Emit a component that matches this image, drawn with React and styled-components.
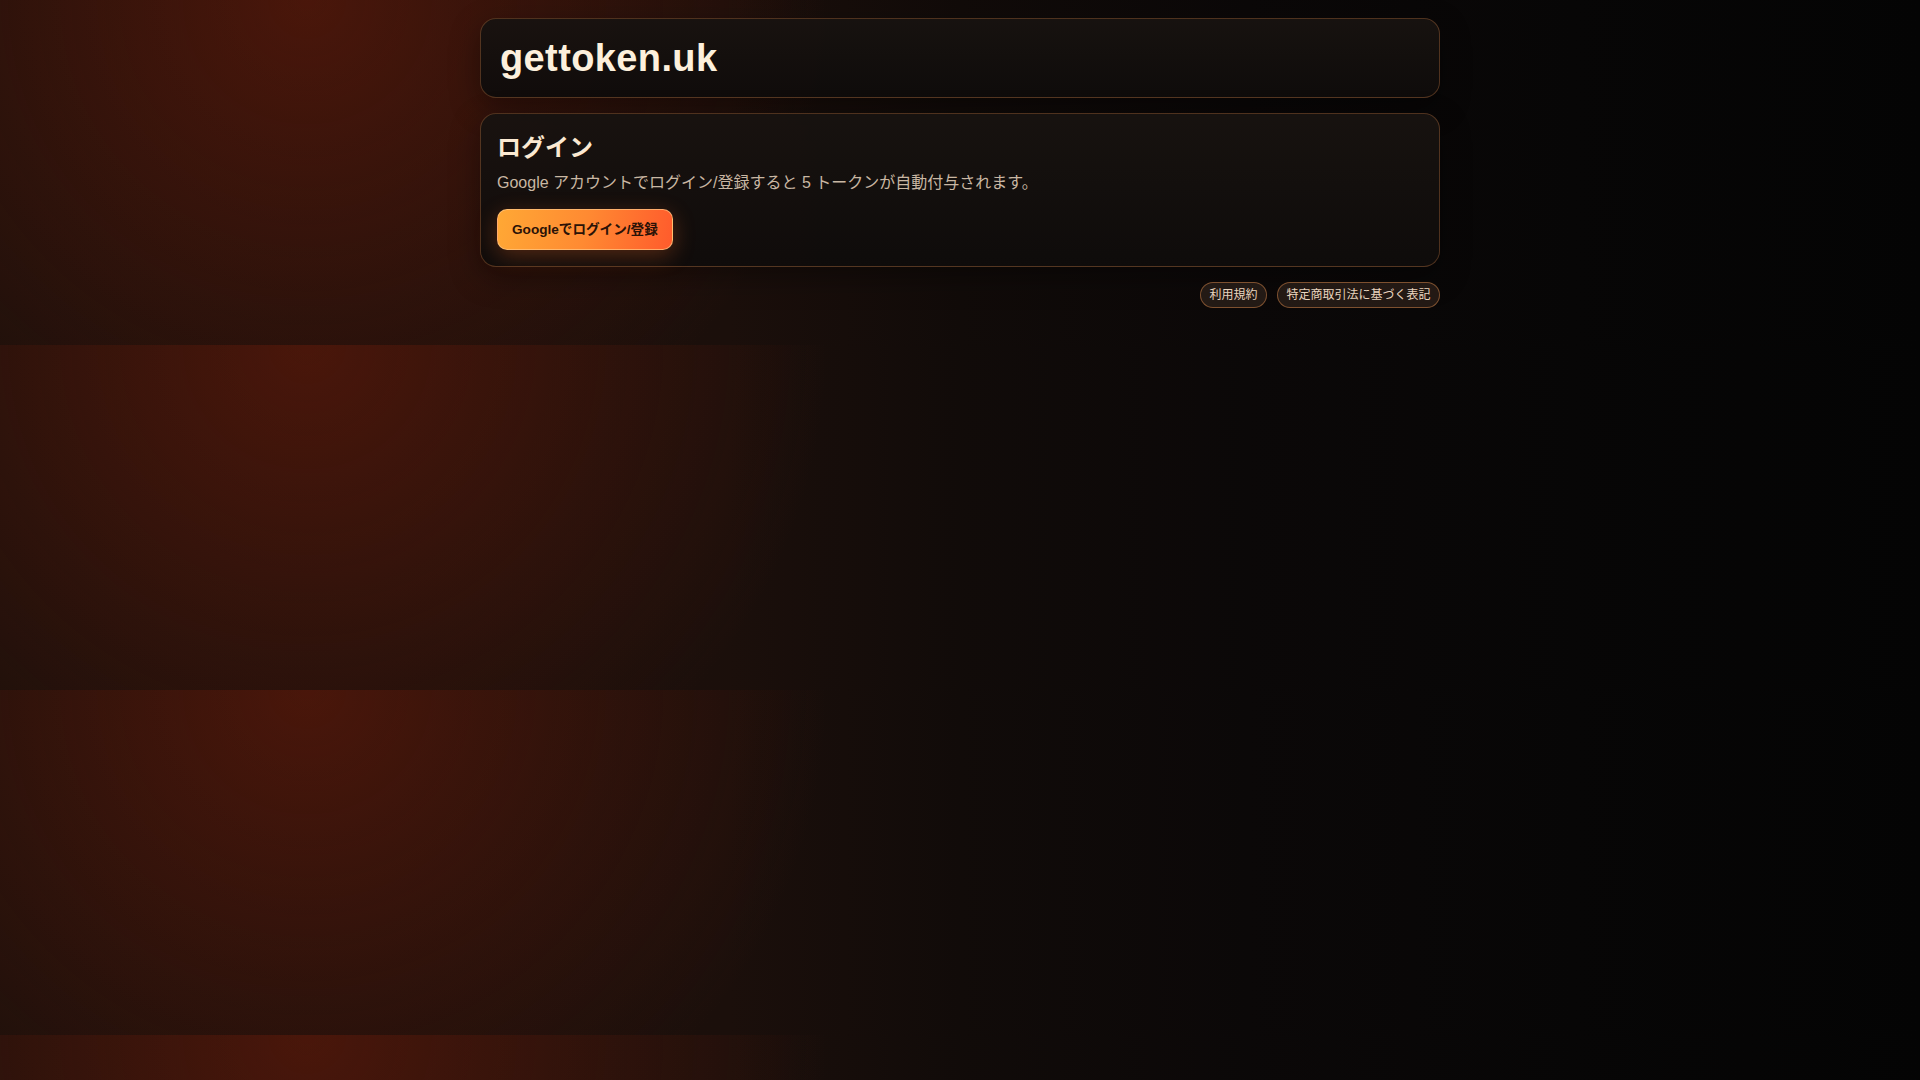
import React from "react";
import styled, { createGlobalStyle } from "styled-components";

const GlobalStyle = createGlobalStyle`
  html { margin: 0; }
  body {
    margin: 0;
    font-family: "Liberation Sans", Arial, "Noto Sans CJK JP", sans-serif;
    color: #f6e6d2;
    background:
      radial-gradient(circle 520px at 16% 0%, rgba(112, 28, 10, 0.54) 0%, rgba(112, 28, 10, 0.21) 60%, rgba(112, 28, 10, 0) 100%),
      linear-gradient(90deg, #1d100b 0%, #1b0f0b 38%, #110b09 50%, #0b0808 65%, #070606 82%, #040404 100%);
  }
`;

const Page = styled.main`
  max-width: 960px;
  margin: 0 auto;
  padding: 18px 0 37px;
  display: flex;
  flex-direction: column;
  gap: 15px;
`;

const Card = styled.section`
  border: 1px solid rgba(214, 132, 72, 0.32);
  border-radius: 16px;
  background: linear-gradient(180deg, rgba(24, 19, 16, 0.96), rgba(15, 12, 11, 0.96));
  box-shadow: 0 10px 30px rgba(0, 0, 0, 0.35);
  padding: ${(p) => p.$pad || "16px"};
`;

const Brand = styled.h1`
  margin: 0;
  font-size: 38px;
  line-height: 46px;
  font-weight: 700;
  color: #fdf0dc;
  letter-spacing: 0.01em;
`;

const Heading = styled.h2`
  margin: 0;
  font-size: 24px;
  line-height: 35px;
  font-weight: 700;
  color: #fbe9d2;
`;

const Lead = styled.p`
  margin: 6px 0 15px;
  font-size: 16px;
  line-height: 23px;
  color: #c9b7a3;
`;

const GoogleButton = styled.button`
  font-family: inherit;
  font-size: 13.6px;
  line-height: 19px;
  font-weight: 700;
  color: #2a1207;
  padding: 10px 14px;
  border: 1px solid rgba(255, 196, 130, 0.75);
  border-radius: 10px;
  background: linear-gradient(100deg, #ffa835 0%, #ff8a32 50%, #ff5b2c 100%);
  box-shadow: 0 6px 22px rgba(255, 110, 40, 0.28);
  cursor: pointer;
`;

const Footer = styled.footer`
  display: flex;
  justify-content: flex-end;
  gap: 10px;
`;

const Pill = styled.a`
  font-size: 12px;
  line-height: 16px;
  padding: 4px 8.5px;
  color: #ead5bf;
  text-decoration: none;
  border: 1px solid rgba(200, 125, 70, 0.55);
  border-radius: 999px;
  background: rgba(40, 29, 23, 0.85);
`;

export default function App() {
  return (
    <>
      <GlobalStyle />
      <Page>
        <Card $pad="16px 19px">
          <Brand>gettoken.uk</Brand>
        </Card>
        <Card>
          <Heading>ログイン</Heading>
          <Lead>Google アカウントでログイン/登録すると 5 トークンが自動付与されます。</Lead>
          <GoogleButton type="button">Googleでログイン/登録</GoogleButton>
        </Card>
        <Footer>
          <Pill href="#terms">利用規約</Pill>
          <Pill href="#tokushoho">特定商取引法に基づく表記</Pill>
        </Footer>
      </Page>
    </>
  );
}
